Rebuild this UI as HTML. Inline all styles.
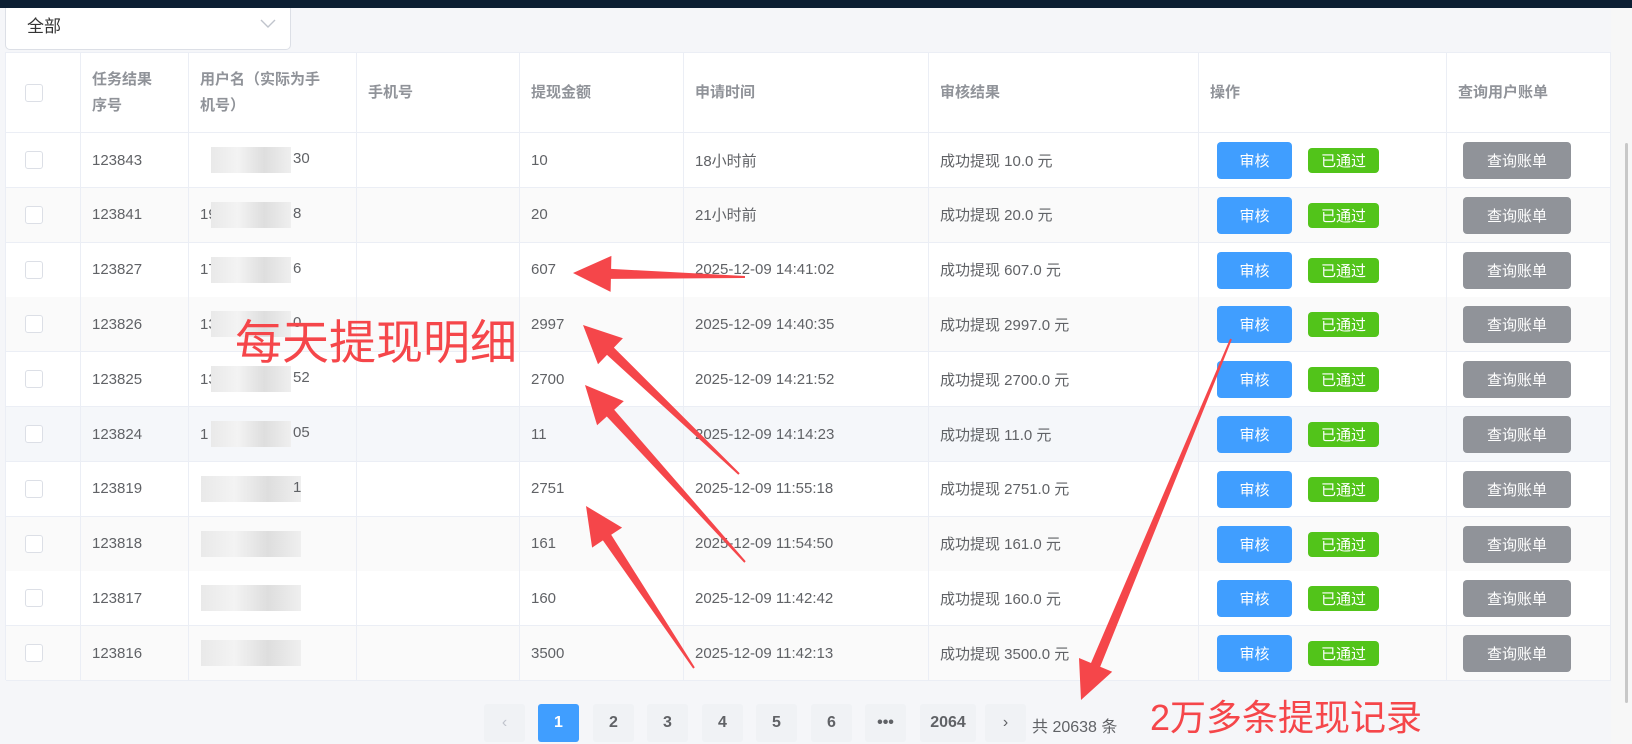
<!DOCTYPE html>
<html><head><meta charset="utf-8"><style>
*{box-sizing:border-box;margin:0;padding:0}
body{width:1632px;height:744px;overflow:hidden;background:#f5f6f9;font-family:"Liberation Sans","Noto Sans CJK SC",sans-serif;color:#606266;font-size:15px;position:relative}
.top{position:absolute;left:0;top:0;width:1632px;height:8px;background:#0c1f33}
.sel{position:absolute;left:5px;top:8px;width:286px;height:42px;background:#fff;border:1px solid #dcdfe6;border-top:none;border-radius:0 0 5px 5px;font-size:17px;color:#333;padding:4px 0 0 21px}
.sel svg{position:absolute;right:14px;top:11px}
.tbl{position:absolute;left:5px;top:52px;width:1606px;height:628px;background:#fff;border:1px solid #ebeef5}
.row{position:absolute;left:0;width:1605px;height:55px;border-bottom:1px solid #ebeef5}
.c{position:absolute;top:0;height:100%;border-right:1px solid #ebeef5;display:flex;align-items:center;padding-left:11px;white-space:nowrap}
.h .c{color:#909399;font-weight:bold;line-height:26px;white-space:normal}
.cb{width:18px;height:18px;border:1px solid #dcdfe6;border-radius:3px;background:#fff;margin-left:8px}
.btn{position:absolute;height:37px;border-radius:4px;color:#fff;display:flex;align-items:center;justify-content:center;font-size:15px}
.b1{left:1211px;width:75px;background:#409eff}
.b2{left:1302px;width:71px;height:25px;background:#52c41a;border-radius:4px}
.b3{left:1457px;width:108px;background:#909399}
.blur{position:absolute;background:linear-gradient(90deg,#e9e9e9,#f3f3f3,#dedede,#efefef);height:26px}
.tail{position:absolute;top:17px}
.pg{position:absolute;top:704px;height:38px;width:41px;background:#f0f2f5;border-radius:3px;color:#606266;font-weight:bold;font-size:16px;display:flex;align-items:center;justify-content:center}
.red{position:absolute;color:#f5464a;font-family:"Liberation Sans","Noto Sans CJK SC",sans-serif}
.sb{position:absolute;left:1611px;top:8px;width:21px;height:736px;background:#f7f7f7}
.sb div{position:absolute;left:14px;top:135px;width:3px;height:560px;background:#c8c8c8;border-radius:2px}
</style></head><body>
<div class="top"></div>
<div class="sel">全部<svg width="16" height="10" viewBox="0 0 16 10"><path d="M1 1l7 7 7-7" stroke="#c0c4cc" stroke-width="1.4" fill="none"/></svg></div>
<div class="tbl" id="t"></div>
<div class="sb"><div></div></div>
<div class="pg" style="left:484px;color:#c0c4cc;font-weight:normal">‹</div>
<div class="pg" style="left:538px;background:#409eff;color:#fff">1</div>
<div class="pg" style="left:593px">2</div>
<div class="pg" style="left:647px">3</div>
<div class="pg" style="left:702px">4</div>
<div class="pg" style="left:756px">5</div>
<div class="pg" style="left:811px">6</div>
<div class="pg" style="left:865px">•••</div>
<div class="pg" style="left:920px;width:56px">2064</div>
<div class="pg" style="left:985px;font-weight:normal">›</div>
<div style="position:absolute;left:1032px;top:713px;font-size:16px">共 20638 条</div>
<div class="red" style="left:1150px;top:698px;font-size:36px;line-height:40px">2万多条提现记录</div>
<div class="red" style="left:235px;top:316px;font-size:47px;line-height:54px">每天提现明细</div>
<svg id="ar" width="1632" height="744" style="position:absolute;left:0;top:0"></svg>
<script>
var X=[0,75,183,351,514,678,923,1193,1441,1605];
var t=document.getElementById('t'),h='';
function cells(a){var s='';for(var i=0;i<9;i++){s+='<div class="c" style="left:'+X[i]+'px;width:'+(X[i+1]-X[i])+'px">'+(a[i]||'')+'</div>';}return s;}
h+='<div class="row h" style="top:0;height:80px">'+cells(['<div class="cb"></div>','任务结果<br>序号','用户名（实际为手<br>机号）','手机号','提现金额','申请时间','审核结果','操作','查询用户账单'])+'</div>';
var d=[['123843','','10','18小时前','30'],['123841','191','20','21小时前','8'],['123827','173','607','2025-12-09 14:41:02','6'],['123826','13','2997','2025-12-09 14:40:35','0'],['123825','13','2700','2025-12-09 14:21:52','52'],['123824','1','11','2025-12-09 14:14:23','05'],['123819','','2751','2025-12-09 11:55:18','1'],['123818','','161','2025-12-09 11:54:50',''],['123817','','160','2025-12-09 11:42:42',''],['123816','','3500','2025-12-09 11:42:13','']];
for(var r=0;r<10;r++){var y=80+r*54.8,bg=r%2?'#fafafa':'#fff';if(r==5)bg='#f5f7fa';
h+='<div class="row" style="top:'+y+'px;background:'+bg+'">'+cells(['<div class="cb"></div>',d[r][0],d[r][1],'',d[r][2],d[r][3],'成功提现 '+d[r][2]+'.0 元','',''])+
'<div class="blur" style="left:'+(r<6?205:195)+'px;top:14px;width:'+(r<6?80:100)+'px"></div>'+
'<div class="tail" style="left:287px">'+d[r][4]+'</div>'+
'<div class="btn b1" style="top:9px">审核</div><div class="btn b2" style="top:15px">已通过</div><div class="btn b3" style="top:9px">查询账单</div></div>';}
t.innerHTML=h;
var A=[[745,277,573,273],[739,474,583,325],[745,562,585,385],[694,668,586,506],[1231,339,1081,700]],s='';
A.forEach(function(a){var dx=a[2]-a[0],dy=a[3]-a[1],L=Math.hypot(dx,dy),ux=dx/L,uy=dy/L,px=-uy,py=ux,hl=38,hw=18,
bx=a[2]-ux*hl,by=a[3]-uy*hl,p=[[a[0]+px*1,a[1]+py*1],[bx+px*5,by+py*5],[bx+px*hw,by+py*hw],[a[2],a[3]],[bx-px*hw,by-py*hw],[bx-px*5,by-py*5],[a[0]-px*1,a[1]-py*1]];
s+='<polygon fill="#f5464a" points="'+p.map(function(q){return q[0].toFixed(1)+','+q[1].toFixed(1)}).join(' ')+'"/>';});
document.getElementById('ar').innerHTML=s;
</script>
</body></html>
